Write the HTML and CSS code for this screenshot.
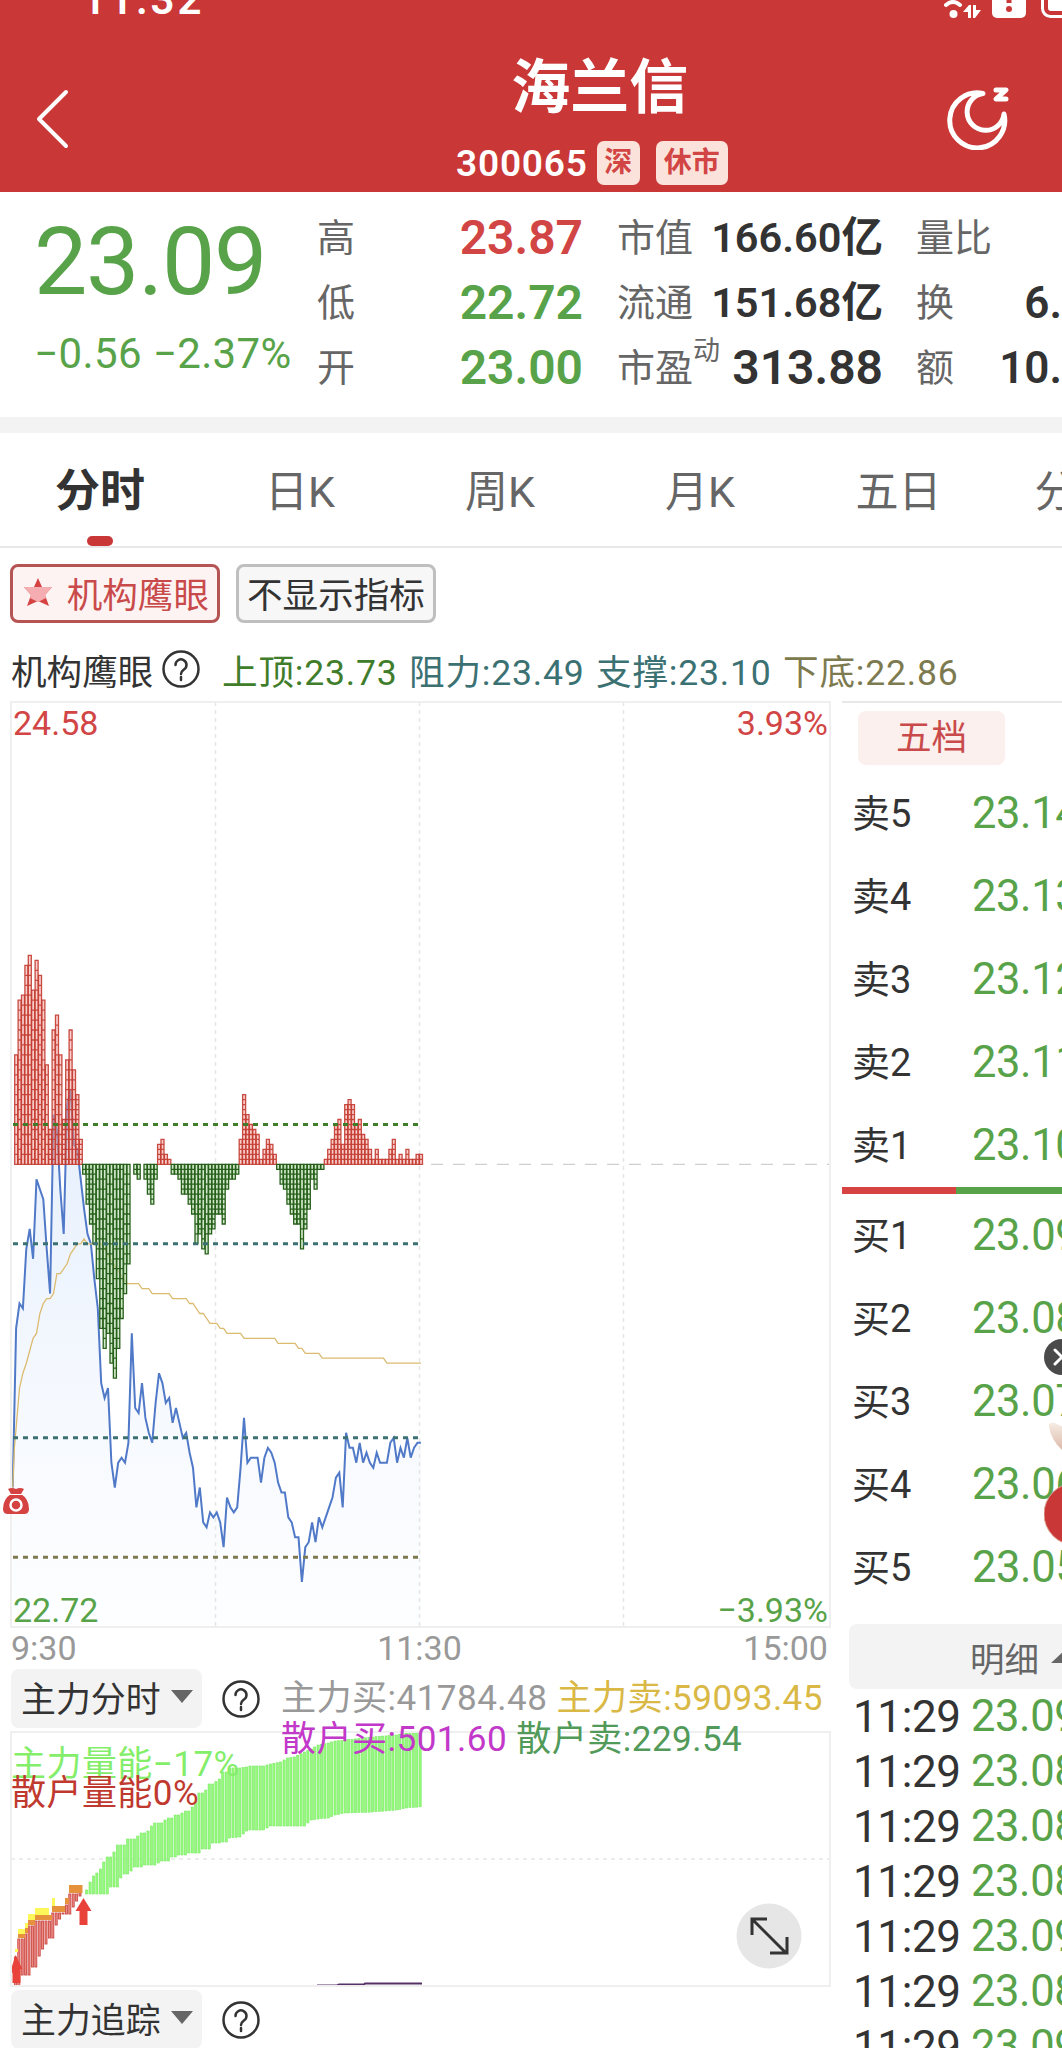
FILE: index.html
```
<!DOCTYPE html>
<html lang="zh-CN">
<head>
    <meta charset="UTF-8">
    <meta name="viewport" content="width=device-width, initial-scale=1.0">
    <title>海兰信 300065</title>
    <link rel="stylesheet" href="styles.css">
</head>
<body>
    <div class="page">
        <header>
            <div class="status-bar">
                <span class="clock">11:32</span>
                <svg class="status-icons" width="122" height="20" viewBox="0 0 122 20">
                    <path d="M6 5 Q13 -1 20 5" fill="none" stroke="#fff" stroke-width="4" stroke-linecap="round"/>
                    <circle cx="13.500" cy="14" r="4"/>
                    <path d="M31 5v13h-3v-6h-5l6-7zM33 5h3v5h5l-6 8h-2z"/>
                    <rect x="52" y="-14" width="34" height="32" rx="5"/>
                    <path d="M69 -4v7" stroke="#c93737" stroke-width="5"/>
                    <circle cx="69" cy="9" r="3" fill="#c93737"/>
                    <rect x="102.500" y="-14" width="40" height="30.500" rx="8" fill="none" stroke="#fff" stroke-width="3"/>
                    <rect x="108" y="-12" width="30" height="23" rx="3"/>
                </svg>
            </div>
            <div class="nav-bar">
                <svg class="back" width="36" height="60" viewBox="0 0 36 60">
                    <path d="M31 3 L4 30 L31 57" fill="none" stroke="#fff" stroke-width="4" stroke-linecap="round" stroke-linejoin="round"/>
                </svg>
                <div class="stock">
                    <h1>海兰信</h1>
                    <div class="stock-info">
                        <span class="code">300065</span>
                        <span class="badge">深</span>
                        <span class="badge badge-wide">休市</span>
                    </div>
                </div>
                <svg class="moon" width="64" height="64" viewBox="0 0 64 64">
                    <path d="M36 7.500 A27.500 27.500 0 1 0 57 28 A18.500 18.500 0 1 1 36 7.500Z" fill="none" stroke="#fff" stroke-width="5" stroke-linejoin="round"/>
                    <path d="M49 4h10l-10 9h10" fill="none" stroke="#fff" stroke-width="5" stroke-linecap="round" stroke-linejoin="round"/>
                </svg>
            </div>
        </header>

        <section class="quote">
            <div class="price">
                <div class="last">23.09</div>
                <div class="change">−0.56 −2.37%</div>
            </div>
            <dl class="col col-range">
                <dt>高</dt><dd class="up">23.87</dd>
                <dt>低</dt><dd class="down">22.72</dd>
                <dt>开</dt><dd class="down">23.00</dd>
            </dl>
            <dl class="col col-value">
                <dt>市值</dt><dd>166.60亿</dd>
                <dt>流通</dt><dd>151.68亿</dd>
                <dt>市盈<sup>动</sup></dt><dd>313.88</dd>
            </dl>
            <dl class="col col-volume">
                <dt>量比</dt><dd></dd>
                <dt>换</dt><dd>6.</dd>
                <dt>额</dt><dd>10.</dd>
            </dl>
        </section>

        <nav class="tabs">
            <a class="active">分时</a>
            <a>日K</a>
            <a>周K</a>
            <a>月K</a>
            <a>五日</a>
            <a>分钟</a>
        </nav>

        <div class="chips">
            <span class="chip chip-on">
                <svg width="30" height="30" viewBox="0 0 30 30">
                    <path d="M15 1l4 9h10l-7 8 4 11-11-5-11 5 4-11-7-8h10z" fill="#d54242"/>
                    <path d="M1 10h28l-7 8 1 3-8 4-8-4 1-3z" fill="#f5adb1"/>
                </svg>
                机构鹰眼
            </span>
            <span class="chip">不显示指标</span>
        </div>

        <main>
            <div class="charts">
                <div class="legend">
                    <span class="legend-name">机构鹰眼</span>
                    <svg class="help" width="38" height="38" viewBox="0 0 38 38">
                        <circle cx="19" cy="19" r="17.500"/>
                        <path d="M13.500 15a5.500 5.500 0 1 1 8.500 4.500c-2 1.500-3 2.200-3 4.500M19 27v3"/>
                    </svg>
                    <span class="top">上顶:23.73</span>
                    <span class="mid">阻力:23.49</span>
                    <span class="mid">支撑:23.10</span>
                    <span class="bottom">下底:22.86</span>
                </div>

                <div class="chart chart-main">
                    <svg id="price-chart" width="819" height="925" viewBox="0 0 819 925"></svg>
                    <span class="corner tl up">24.58</span>
                    <span class="corner tr up">3.93%</span>
                    <span class="corner bl down">22.72</span>
                    <span class="corner br down">−3.93%</span>
                    <svg class="bag" width="28" height="28" viewBox="0 0 28 28">
                        <path d="M6 2q4-2 8 0 4-2 8 0l-3 5q8 5 8 15 0 5-5 5H6q-5 0-5-5Q1 12 9 7z" fill="#d54242"/>
                        <path d="M8 7.500h12" stroke="#fff" stroke-width="1"/>
                        <circle cx="14" cy="18" r="5.500" fill="#d54242" stroke="#fff" stroke-width="2.500"/>
                    </svg>
                </div>
                <div class="axis"><span>9:30</span><span>11:30</span><span>15:00</span></div>

                <div class="sub-head">
                    <span class="select">主力分时<i></i></span>
                    <svg class="help" width="38" height="38" viewBox="0 0 38 38">
                        <circle cx="19" cy="19" r="17.500"/>
                        <path d="M13.500 15a5.500 5.500 0 1 1 8.500 4.500c-2 1.500-3 2.200-3 4.500M19 27v3"/>
                    </svg>
                    <p>
                        <span class="main-buy">主力买:41784.48</span>
                        <span class="main-sell">主力卖:59093.45</span><br>
                        <span class="retail-buy">散户买:501.60</span>
                        <span class="retail-sell">散户卖:229.54</span>
                    </p>
                </div>
                <div class="chart chart-sub">
                    <svg id="flow-chart" width="819" height="254" viewBox="0 0 819 254"></svg>
                    <span class="energy energy-main">主力量能−17%</span>
                    <span class="energy energy-retail">散户量能0%</span>
                    <svg class="expand" width="66" height="66" viewBox="0 0 66 66">
                        <circle cx="33" cy="33" r="32.500" fill="#e6e6e6"/>
                        <path d="M16 32V16h15M16 16l34 34M34 50h17V34" fill="none" stroke="#333" stroke-width="3"/>
                    </svg>
                </div>

                <div class="sub-head sub-head-last">
                    <span class="select">主力追踪<i></i></span>
                    <svg class="help" width="38" height="38" viewBox="0 0 38 38">
                        <circle cx="19" cy="19" r="17.500"/>
                        <path d="M13.500 15a5.500 5.500 0 1 1 8.500 4.500c-2 1.500-3 2.200-3 4.500M19 27v3"/>
                    </svg>
                </div>
            </div>

            <aside>
                <div class="depth-tab">五档</div>
                <ul class="depth">
                    <li><span>卖5</span><b>23.14</b></li>
                    <li><span>卖4</span><b>23.13</b></li>
                    <li><span>卖3</span><b>23.12</b></li>
                    <li><span>卖2</span><b>23.11</b></li>
                    <li><span>卖1</span><b>23.10</b></li>
                </ul>
                <div class="ratio"></div>
                <ul class="depth">
                    <li><span>买1</span><b>23.09</b></li>
                    <li><span>买2</span><b>23.08</b></li>
                    <li><span>买3</span><b>23.07</b></li>
                    <li><span>买4</span><b>23.06</b></li>
                    <li><span>买5</span><b>23.05</b></li>
                </ul>
                <div class="detail">明细<i></i></div>
                <ul class="trades">
                    <li><span>11:29</span><b>23.09</b></li>
                    <li><span>11:29</span><b>23.08</b></li>
                    <li><span>11:29</span><b>23.08</b></li>
                    <li><span>11:29</span><b>23.08</b></li>
                    <li><span>11:29</span><b>23.09</b></li>
                    <li><span>11:29</span><b>23.08</b></li>
                    <li><span>11:29</span><b>23.09</b></li>
                </ul>
            </aside>
        </main>

        <!-- floating promo, half outside the screen -->
        <svg class="floating" width="18" height="208" viewBox="0 0 18 208">
            <defs>
                <linearGradient id="skin" x1="0" y1="0" x2="0" y2="1">
                    <stop offset="0" stop-color="#f6ece4"/>
                    <stop offset="1" stop-color="#dcb8a8"/>
                </linearGradient>
            </defs>
            <circle cx="18" cy="18" r="18" fill="#4a4a4a"/>
            <path d="M11 11l14 14M11 25l14-14" stroke="#fff" stroke-width="3" stroke-linecap="round"/>
            <path d="M5 88q-1-5 6-4l8 4v24q-12-11-14-24z" fill="url(#skin)"/>
            <circle cx="31" cy="175" r="31" fill="#c93737" stroke="#dba08f" stroke-width="1"/>
        </svg>
    </div>

    <script>
        // Minute -> x, and cents from the previous close -> y
        const BASE = 462.3;
        const UNIT = 4.973;
        const px = m => 1.7 + m * 3.402;
        const py = v => BASE - v * UNIT;

        const price = [-65, -33, -28, -29, -17, -13, -19, -3, -5, -7, -17, -26, 10, 7, -5, -14, 12, 15, 4, 3,
            -3, -9, -14, -16, -23, -29, -44, -47, -45, -60, -65, -60, -59, -60, -56, -34, -49, -50, -44, -51,
            -54, -56, -48, -42, -44, -48, -47, -52, -49, -52, -55, -54, -58, -61, -69, -65, -72, -73, -70, -71,
            -70, -72, -77, -67, -69, -70, -69, -61, -51, -60, -59, -59, -59, -64, -59, -57, -58, -60, -64, -66,
            -66, -71, -72, -75, -75, -84, -77, -76, -72, -76, -71, -73, -71, -69, -67, -63, -62, -69, -54, -57,
            -57, -60, -56, -60, -58, -60, -61, -58, -60, -60, -60, -56, -55, -60, -57, -59, -55, -59, -57, -56, -56];

        const average = [[0, -65], [.5, -57], [1.5, -49], [2, -45], [3, -42], [4, -40], [6, -35], [7, -34], [8, -30],
            [9, -28], [10, -27], [11, -27], [12, -26], [13, -22], [14, -22], [16, -20], [17, -18], [19, -16], [20, -16],
            [21, -15], [22, -16], [26, -16], [27, -17], [30.5, -21], [33.7, -24], [37, -24], [38, -25], [40, -25],
            [41, -26], [46, -26], [47, -27], [51, -27], [52, -28], [53, -28], [55, -30], [56, -30], [58, -32], [60, -32],
            [61, -33], [62, -33], [63, -34], [67, -34], [68, -35], [77, -35], [78, -36], [83, -36], [84, -37], [85, -37],
            [86, -38], [90, -38], [91, -39], [109, -39], [110, -40], [120, -40]];

        const bars = [22, 33, 34, 40, 42, 35, 41, 38, 33, 20, 7, 27, 30, 22, 9, 21, 27, 19, 14, 5,
            -2, -8, -12, -16, -23, -33, -37, -34, -40, -43, -37, -31, -26, -20, 0, -2, -3, 0, -3, -6,
            -8, -3, 4, 5, 2, 1, -2, -2, -3, -6, -6, -8, -10, -16, -14, -17, -18, -14, -13, -10,
            -10, -12, -5, -3, -3, -2, 5, 14, 10, 8, 7, 6, 1, 3, 5, 4, 2, -1, -4, -5,
            -8, -10, -12, -12, -17, -13, -9, -3, -5, -1, -1, 1, 3, 5, 8, 9, 4, 12, 13, 12,
            8, 9, 6, 5, 3, 1, 3, 1, 1, 1, 3, 5, 1, 2, 1, 3, 1, 1, 2, 2];

        const points = list => list.map(p => px(p[0]).toFixed(1) + ',' + py(p[1]).toFixed(1)).join(' ');

        function drawPriceChart() {
            const line = points(price.map((v, i) => [i, v]));
            let out = '<defs><linearGradient id="area" x1="0" y1="0" x2="0" y2="1">' +
                '<stop offset="0" stop-color="#e5effd"/><stop offset=".6" stop-color="#f6f9fe"/>' +
                '<stop offset="1" stop-color="#fdfeff"/></linearGradient></defs>';
            out += `<polygon class="area" points="${px(0)},925 ${line} ${px(120)},925"/>`;

            [204.5, 408.5, 612.5].forEach(x => out += `<path class="grid" d="M${x} 0V925"/>`);
            out += `<path class="zero" d="M420 ${BASE}H819"/>`;

            out += `<polyline class="price-line" points="${line}"/>`;
            out += `<polyline class="average-line" points="${points(average)}"/>`;

            bars.forEach((v, i) => {
                if (!v) return;
                const n = Math.abs(v);
                const dir = v > 0 ? 1 : -1;
                const x = px(i) + 2;
                const step = n > 14 ? 2 : 1;
                let d = `M${x.toFixed(1)} ${BASE}V${py(v).toFixed(1)}h3V${BASE}z`;
                for (let k = n - step; k > 0; k -= step) {
                    d += `M${x.toFixed(1)} ${py(k * dir).toFixed(1)}h3`;
                }
                out += `<path class="${v > 0 ? 'bar-up' : 'bar-down'}" d="${d}"/>`;
            });

            [[8, '#3f7d2b'], [-16, '#3b7172'], [-55, '#3b7172'], [-79, '#7d7a50']].forEach(l => {
                out += `<path class="level" stroke="${l[1]}" d="M2 ${py(l[0])}H408"/>`;
            });
            document.getElementById('price-chart').innerHTML = out;
        }

        // [minute, top, bottom] of the main-force band
        const band = [[21, 158, 162], [22, 150, 162], [23, 144, 162], [24, 141, 162], [25, 137, 162], [26, 130, 162],
            [27, 125, 162], [28, 125, 155], [29, 120, 155], [30, 113, 155], [31, 113, 146], [32, 113, 142], [33, 107, 142],
            [34, 107, 139], [35, 107, 135], [36, 104, 135], [37, 101, 135], [38, 101, 133], [39, 99, 133], [40, 94, 133],
            [41, 91, 133], [42, 91, 131], [43, 91, 129], [44, 88, 129], [45, 86, 129], [46, 86, 125], [47, 83, 125],
            [48, 83, 123], [50, 79, 123], [51, 79, 121], [52, 75, 121], [53, 70, 121], [54, 61, 121], [55, 61, 117],
            [56, 58, 117], [57, 52, 117], [58, 52, 111], [60, 47, 111], [61, 40, 110], [62, 40, 110], [63, 36, 106],
            [66, 36, 105], [68, 35, 99], [69, 34, 98], [73, 34, 98], [75, 32, 94], [78, 30, 94], [80, 26, 94], [82, 25, 94],
            [85, 20, 94], [87, 17, 88], [89, 13, 87], [92, 11, 86], [94, 9, 83], [97, 8, 81], [105, 5, 80], [112, 3, 78],
            [115, 1, 76], [120, 1, 74.5]];

        function drawFlowChart() {
            let out = '<path class="grid" d="M0 127H819"/>';
            for (let m = 21; m <= 119; m++) {
                const k = band.findIndex(b => b[0] > m) - 1;
                const a = band[k], b = band[k + 1];
                const t = (m - a[0]) / (b[0] - a[0]);
                const top = a[1] + (b[1] - a[1]) * t;
                const bottom = a[2] + (b[2] - a[2]) * t;
                out += `<rect class="flow-bar" x="${(px(m) + 1.5).toFixed(1)}" y="${top.toFixed(1)}" width="2.2" height="${(bottom - top).toFixed(1)}"/>`;
            }

            // [x, y, width, height]
            const yellow = [[4, 217, 3, 3], [7, 197, 7, 6], [14, 191, 3, 6], [17, 182, 7, 7], [24, 176, 14, 8], [41, 166, 3, 8]];
            const orange = [[7, 202, 7, 4], [14, 196, 3, 5], [17, 188, 7, 5], [24, 183, 17, 5], [41, 174, 13, 6], [54, 166, 4, 6], [58, 153, 13.5, 8]];
            const red = [[225, 254], [207, 254], [207, 243], [202, 243], [194, 243], [194, 235], [189, 235], [189, 224],
                [189, 217], [189, 212], [189, 206], [181, 206], [181, 193], [181, 187], [181, 182], [173, 182], [162, 182],
                [162, 175], [162, 169], [161, 164]];
            red.forEach((r, i) => out += `<rect class="flow-red" x="${(px(i) + 1.7).toFixed(1)}" y="${r[0]}" width="2" height="${r[1] - r[0]}"/>`);
            yellow.forEach(r => out += `<rect fill="#fdf75a" x="${r[0]}" y="${r[1]}" width="${r[2]}" height="${r[3]}"/>`);
            orange.forEach(r => out += `<rect fill="#e6913c" x="${r[0]}" y="${r[1]}" width="${r[2]}" height="${r[3]}"/>`);

            out += '<path class="arrow" d="M72.500 166l8 13h-4v14h-8v-14h-4z"/>';
            out += '<path class="arrow" d="M4.500 223l7 14h-2v14h-8v-10l-2-2z"/>';
            out += '<path class="retail-line" d="M306 253.500h20l2-1h25l1-1h57"/>';
            document.getElementById('flow-chart').innerHTML = out;
        }

        drawPriceChart();
        drawFlowChart();
    </script>
</body>
</html>
```
FILE: styles.css
```
* {
    margin: 0;
    padding: 0;
    box-sizing: border-box;
}

body {
    font-family: Roboto, 'Noto Sans CJK SC', sans-serif;
    color: #333;
    background-color: #fff;
}

.page {
    position: relative;
    width: 1062px;
    height: 2048px;
    overflow: hidden;
}

ul {
    list-style: none;
}

.up {
    color: #d24545;
}

.down {
    color: #58a349;
}

/* header */
header {
    height: 192px;
    background-color: #c93737;
    color: #fff;
}

.status-bar {
    display: flex;
    justify-content: space-between;
    align-items: flex-start;
    height: 44px;
    padding-left: 82px;
}

.clock {
    font-size: 42px;
    font-weight: 600;
    line-height: 44px;
    margin-top: -22px;
    letter-spacing: 3px;
}

.status-icons {
    fill: #fff;
}

.nav-bar {
    display: flex;
    height: 148px;
    padding: 0 51px 0 35px;
}

.back {
    margin-top: 45px;
}

.moon {
    margin: 42px 0 0 auto;
}

.stock {
    margin-left: 385px;
    text-align: center;
}

h1 {
    padding-left: 16px;
    font-size: 59px;
    line-height: 88px;
    font-weight: 700;
}

.stock-info {
    display: flex;
    align-items: center;
    height: 62px;
}

.code {
    font-size: 37px;
    font-weight: 600;
    letter-spacing: .8px;
    margin-right: 9px;
}

.badge {
    width: 43px;
    height: 44px;
    line-height: 44px;
    border-radius: 7px;
    background-color: #fbe3db;
    color: #d24545;
    font-size: 28px;
    font-weight: 700;
    margin-right: 16px;
}

.badge-wide {
    width: 72px;
    margin-right: 0;
}

/* quote */
.quote {
    display: flex;
    height: 241px;
    border-bottom: 16px solid #f3f3f3;
}

.price {
    width: 317px;
    padding: 20px 0 0 34px;
    color: #58a349;
    white-space: nowrap;
}

.last {
    font-size: 95px;
    line-height: 100px;
    letter-spacing: -1.3px;
}

.change {
    font-size: 42px;
    line-height: 50px;
    margin-top: 17px;
    letter-spacing: .4px;
}

.col {
    display: grid;
    grid-template-rows: repeat(3, 65px);
    grid-template-columns: auto 1fr;
    align-items: center;
    padding-top: 13px;
    height: 208px;
    font-size: 38px;
    white-space: nowrap;
}

.col dt {
    color: #666;
    line-height: 68px;
}

.col dd {
    font-weight: 600;
    line-height: 62px;
    text-align: right;
}

.col-range {
    width: 266px;
}

.col-range dd {
    font-size: 48px;
}

.col-value {
    width: 267px;
    padding-right: 1px;
    margin-left: 34px;
}

.col-value dd {
    font-size: 41.5px;
}

.col-value dd:last-child {
    font-size: 48px;
}

.col-volume {
    width: 146px;
    margin-left: 32px;
}

.col-volume dd {
    font-size: 44px;
}

sup {
    font-size: 27px;
    line-height: 0;
    vertical-align: 21px;
    margin-right: -30px;
}

/* tabs */
.tabs {
    display: flex;
    height: 115px;
    border-bottom: 2px solid #e8e8e8;
    overflow: hidden;
}

.tabs a {
    flex: 0 0 200px;
    position: relative;
    text-align: center;
    font-size: 43px;
    line-height: 118px;
    color: #666;
}

.tabs a:nth-child(5) {
    flex-basis: 197px;
}

.tabs a:last-child {
    flex-basis: 161px;
}

.tabs .active {
    color: #333;
    font-weight: 700;
    font-size: 45px;
}

.tabs .active::after {
    content: "";
    position: absolute;
    left: 87px;
    bottom: 0;
    width: 26px;
    height: 10px;
    border-radius: 5px;
    background-color: #c93737;
}

/* indicator chips */
.chips {
    display: flex;
    gap: 16px;
    height: 88px;
    padding: 16px 0 0 10px;
}

.chip {
    display: flex;
    align-items: center;
    height: 59px;
    padding: 0 8px 3px;
    border: 3px solid #bfbfbf;
    border-radius: 8px;
    background-color: #f7f7f7;
    font-size: 35.6px;
}

.chip-on {
    width: 210px;
    padding: 0 8px 3px 10px;
    justify-content: space-between;
    border-color: #b65454;
    background-color: #fdf3f3;
    color: #c94a4a;
}

/* charts */
main {
    display: flex;
}

.charts {
    width: 819px;
    margin-left: 11px;
}

.legend {
    display: flex;
    align-items: center;
    height: 66px;
    font-size: 35.6px;
    white-space: nowrap;
}

.legend span {
    flex: 0 0 187px;
    letter-spacing: .8px;
}

.legend .legend-name {
    flex-basis: 151px;
    letter-spacing: 0;
}

.legend .help {
    margin-right: 22px;
}

.help {
    flex: none;
    fill: none;
    stroke: #333;
    stroke-width: 2.5;
    stroke-linecap: round;
}

.top {
    color: #3f7d2b;
}

.mid {
    color: #3b7172;
}

.bottom {
    color: #7d7a50;
}

.chart {
    position: relative;
    outline: 2px solid #efefef;
    outline-offset: -1px;
}

.chart svg {
    display: block;
}

.chart-main {
    height: 925px;
}

.corner {
    position: absolute;
    font-size: 34px;
    line-height: 36px;
}

.tl {
    left: 2px;
    top: 3px;
}

.tr {
    right: 2px;
    top: 3px;
}

.bl {
    left: 2px;
    bottom: -1px;
}

.br {
    right: 2px;
    bottom: -1px;
}

.bag {
    position: absolute;
    left: -9px;
    top: 785px;
}

.area {
    fill: url(#area);
}

.grid {
    stroke: #e6e6e6;
    stroke-width: 1.5;
    stroke-dasharray: 4 4;
}

.zero {
    stroke: #cfcfcf;
    stroke-width: 1.2;
    stroke-dasharray: 12 10;
}

.price-line {
    fill: none;
    stroke: #5079c8;
    stroke-width: 2;
}

.average-line {
    fill: none;
    stroke: #dbbb70;
    stroke-width: 1.3;
}

.bar-up {
    fill: rgba(246, 170, 162, .55);
    stroke: #c2382f;
    stroke-width: 1.3;
    stroke-opacity: .9;
}

.bar-down {
    fill: rgba(180, 216, 168, .6);
    stroke: #27601b;
    stroke-width: 1.3;
}

.level {
    stroke-width: 3;
    stroke-dasharray: 5 5;
}

.axis {
    display: flex;
    height: 42px;
    font-size: 34px;
    line-height: 43px;
    color: #999;
    padding-right: 2px;
}

.axis span {
    flex: 1;
}

.axis span:nth-child(2) {
    text-align: center;
}

.axis span:last-child {
    text-align: right;
}

.sub-head {
    display: flex;
    align-items: flex-start;
    height: 63px;
}

.select {
    display: flex;
    align-items: center;
    justify-content: space-between;
    width: 191px;
    height: 59px;
    padding: 0 9px 4px 10px;
    border-radius: 8px;
    background-color: #f3f3f3;
    font-size: 34.9px;
}

.select i {
    border: 11px solid transparent;
    border-top: 13px solid #666;
    border-bottom: 0;
}

.sub-head .help {
    margin: 11px 0 0 20px;
}

.sub-head p {
    position: relative;
    z-index: 1;
    margin-left: 21px;
    font-size: 35.1px;
    line-height: 41px;
    letter-spacing: .45px;
    padding-top: 9px;
    white-space: nowrap;
}

.main-buy {
    color: #999;
}

.main-sell {
    color: #d9b845;
}

.retail-buy {
    color: #c238c9;
}

.retail-sell {
    color: #529a5a;
}

.chart-sub {
    height: 254px;
}

.flow-bar {
    fill: #93fc7b;
    stroke: #7ce766;
    stroke-width: .6;
}

.flow-red {
    fill: #f08c86;
    stroke: #c94843;
    stroke-width: .9;
}

.arrow {
    fill: #e8423b;
}

.retail-line {
    fill: none;
    stroke: #553067;
    stroke-width: 2;
}

.energy {
    position: absolute;
    left: 0;
    font-size: 35px;
    line-height: 40px;
    letter-spacing: .45px;
}

.energy-main {
    top: 13px;
    color: #84ee6b;
}

.energy-retail {
    top: 42px;
    color: #c0392f;
}

.expand {
    position: absolute;
    right: 28px;
    bottom: 17px;
}

.sub-head-last {
    padding-top: 4px;
}

/* order book */
aside {
    width: 220px;
    margin-left: 12px;
    margin-top: 65px;
    border-top: 2px solid #e8e8e8;
}

.depth-tab {
    width: 147px;
    height: 54px;
    margin: 8px 0 7px 16px;
    border-radius: 8px;
    background-color: #fbf0ed;
    color: #c94a4a;
    font-size: 35.6px;
    line-height: 54px;
    text-align: center;
}

.depth li {
    display: flex;
    align-items: center;
    height: 83px;
    padding-left: 10px;
    font-size: 38px;
}

.depth span {
    flex: 0 0 120px;
    padding-bottom: 7px;
}

aside b {
    font-weight: 400;
    font-size: 43.5px;
    letter-spacing: -.4px;
    color: #58a349;
}

.ratio {
    height: 7px;
    background: linear-gradient(to right, #d74343 114px, #58a349 114px);
}

.detail {
    display: flex;
    align-items: center;
    height: 65px;
    margin: 15px 0 0 7px;
    padding-left: 121px;
    border-radius: 8px 0 0 8px;
    background-color: #f3f3f3;
    color: #666;
    font-size: 34.5px;
    white-space: nowrap;
}

.detail i {
    flex: none;
    margin-left: 12px;
    border: 13px solid transparent;
    border-bottom: 12px solid #666;
    border-top: 0;
}

.trades li {
    display: flex;
    align-items: center;
    height: 55px;
    padding-left: 11px;
    font-size: 44px;
    letter-spacing: -.4px;
    white-space: nowrap;
}

.trades span {
    flex: 0 0 118px;
}

.floating {
    position: absolute;
    right: 0;
    top: 1339px;
}
```
